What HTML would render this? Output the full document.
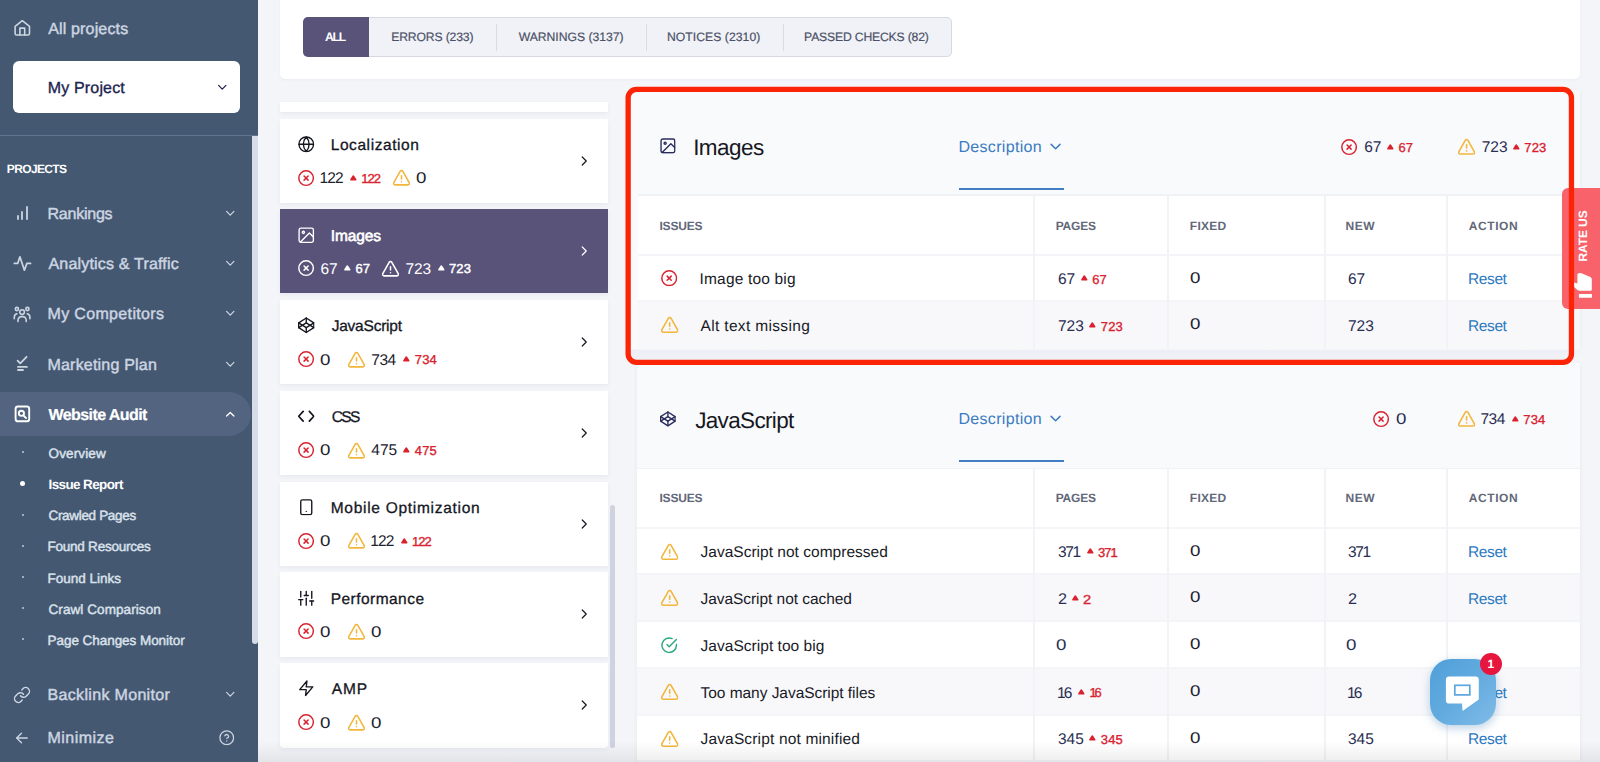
<!DOCTYPE html>
<html lang="en"><head><meta charset="utf-8"><title>Issue Report</title>
<style>
*{box-sizing:border-box;margin:0;padding:0}
html,body{width:1600px;height:762px;overflow:hidden}
body{font-family:"Liberation Sans",sans-serif;text-rendering:geometricPrecision;background:#f4f5f9;position:relative;color:#1b1c28}
.a{position:absolute}
.t{position:absolute;white-space:nowrap;line-height:1}
.ic{position:absolute;fill:none;stroke-linecap:round;stroke-linejoin:round;overflow:visible}
.sb{-webkit-text-stroke:0.35px currentColor}
.sbt{-webkit-text-stroke:0.18px currentColor}
.sbl{-webkit-text-stroke:0.45px currentColor}
.sbm{-webkit-text-stroke:0.3px currentColor}
.sbh{-webkit-text-stroke:0.6px currentColor}
.sbb{-webkit-text-stroke:0.2px currentColor}
</style></head><body>

<svg width="0" height="0" style="position:absolute">
<defs>
<symbol id="i-home" viewBox="0 0 24 24"><path d="M3 9l9-7 9 7v11a2 2 0 0 1-2 2H5a2 2 0 0 1-2-2z"/><polyline points="9 22 9 12 15 12 15 22"/></symbol>
<symbol id="i-bars" viewBox="0 0 24 24"><line x1="5" y1="21" x2="5" y2="16"/><line x1="12" y1="21" x2="12" y2="10"/><line x1="19" y1="21" x2="19" y2="2"/></symbol>
<symbol id="i-activity" viewBox="0 0 24 24"><polyline points="23 12 18 12 15 20 9 3 6 12 1 12"/></symbol>
<symbol id="i-users" viewBox="0 0 24 24"><circle cx="12" cy="9" r="3.4"/><path d="M5.5 22v-2.5a4.5 4.5 0 0 1 4.5-4.5h4a4.5 4.5 0 0 1 4.5 4.5V22"/><circle cx="4.6" cy="4.6" r="1.9"/><circle cx="19.4" cy="4.6" r="1.9"/><path d="M1 15.5v-2.2a3.4 3.4 0 0 1 3.2-3.4"/><path d="M23 15.5v-2.2a3.4 3.4 0 0 0-3.2-3.4"/></symbol>
<symbol id="i-plan" viewBox="0 0 24 24"><polyline points="5 8 10 13 20 2"/><line x1="3" y1="17" x2="21" y2="17"/><line x1="3" y1="22" x2="15" y2="22"/></symbol>
<symbol id="i-audit" viewBox="0 0 24 24"><rect x="1.5" y="1.5" width="21" height="21" rx="3"/><circle cx="11" cy="11" r="4.2"/><line x1="14.2" y1="14.2" x2="18" y2="18"/></symbol>
<symbol id="i-link" viewBox="0 0 24 24"><path d="M10 13a5 5 0 0 0 7.54.54l3-3a5 5 0 0 0-7.07-7.07l-1.72 1.71"/><path d="M14 11a5 5 0 0 0-7.54-.54l-3 3a5 5 0 0 0 7.07 7.07l1.71-1.71"/></symbol>
<symbol id="i-arrow-left" viewBox="0 0 24 24"><line x1="21" y1="12" x2="3" y2="12"/><polyline points="11 20 3 12 11 4"/></symbol>
<symbol id="i-help" viewBox="0 0 24 24"><circle cx="12" cy="12" r="10.6"/><path d="M9.09 9a3 3 0 0 1 5.83 1c0 2-3 3-3 3"/><line x1="12" y1="17" x2="12.01" y2="17"/></symbol>
<symbol id="i-globe" viewBox="0 0 24 24"><circle cx="12" cy="12" r="10.6"/><line x1="1.4" y1="12" x2="22.6" y2="12"/><path d="M12 1.4a16 16 0 0 1 4.2 10.6 16 16 0 0 1-4.2 10.6 16 16 0 0 1-4.2-10.6 16 16 0 0 1 4.2-10.6z"/></symbol>
<symbol id="i-image" viewBox="0 0 24 24"><rect x="1.6" y="1.6" width="20.8" height="20.8" rx="2.6"/><circle cx="7.8" cy="7.8" r="1.6"/><polyline points="22.4 14.6 16.5 8.7 3.6 21.8"/></symbol>
<symbol id="i-codepen" viewBox="0 0 24 24"><polygon points="12 1.5 23 8.5 23 15.5 12 22.5 1 15.5 1 8.5 12 1.5"/><line x1="12" y1="22.5" x2="12" y2="15.5"/><polyline points="23 8.5 12 15.5 1 8.5"/><polyline points="1 15.5 12 8.5 23 15.5"/><line x1="12" y1="1.5" x2="12" y2="8.5"/></symbol>
<symbol id="i-code" viewBox="0 0 24 24"><polyline points="16.5 19 23 12 16.5 5"/><polyline points="7.5 5 1 12 7.5 19"/></symbol>
<symbol id="i-phone" viewBox="0 0 24 24"><rect x="4" y="1.2" width="16" height="21.6" rx="2.4"/><line x1="12" y1="18" x2="12.01" y2="18"/></symbol>
<symbol id="i-sliders" viewBox="0 0 24 24"><line x1="4" y1="22" x2="4" y2="14"/><line x1="4" y1="10" x2="4" y2="2"/><line x1="12" y1="22" x2="12" y2="12"/><line x1="12" y1="8" x2="12" y2="2"/><line x1="20" y1="22" x2="20" y2="16"/><line x1="20" y1="12" x2="20" y2="2"/><line x1="1" y1="14" x2="7" y2="14"/><line x1="9" y1="8" x2="15" y2="8"/><line x1="17" y1="16" x2="23" y2="16"/></symbol>
<symbol id="i-zap" viewBox="0 0 24 24"><polygon points="13 1.5 2.5 14 12 14 11 22.5 21.5 10 12 10 13 1.5"/></symbol>
<symbol id="i-xc" viewBox="0 0 24 24"><circle cx="12" cy="12" r="10.8"/><line x1="15" y1="9" x2="9" y2="15"/><line x1="9" y1="9" x2="15" y2="15"/></symbol>
<symbol id="i-warn" viewBox="0 0 24 24"><path d="M10.1 3.2L1.1 19.3a2.1 2.1 0 0 0 1.8 3.1h18.2a2.1 2.1 0 0 0 1.8-3.1L13.9 3.2a2.2 2.2 0 0 0-3.8 0z"/><line x1="12" y1="9.5" x2="12" y2="14"/><line x1="12" y1="18" x2="12.01" y2="18"/></symbol>
<symbol id="i-check" viewBox="0 0 24 24"><path d="M22.6 11v1a10.6 10.6 0 1 1-6.3-9.7"/><polyline points="22.6 3.6 12 14.2 8.8 11"/></symbol>
<symbol id="i-chev-d" viewBox="0 0 24 24"><polyline points="5 8.5 12 15.5 19 8.5"/></symbol>
<symbol id="i-chev-u" viewBox="0 0 24 24"><polyline points="5 15.5 12 8.5 19 15.5"/></symbol>
<symbol id="i-chev-r" viewBox="0 0 24 24"><polyline points="8.5 4 16.5 12 8.5 20"/></symbol>
</defs>
</svg>

<div class="a" id="sidebar" style="left:0;top:0;width:258px;height:762px;background:#445872"></div>
<div class="a" style="left:0;top:135px;width:258px;height:1px;background:#60738f"></div>
<div class="a" style="left:252px;top:136px;width:6px;height:508px;background:#d6dce8;border-radius:0 0 3px 3px"></div>
<svg class="ic" style="left:10px;top:14px;width:26px;height:26px;stroke:#cdd5e1;stroke-width:1.6" viewBox="10 14 26 26"><path d="M15.1 26.4 L22.3 20.7 L29.5 26.4 V33.4 Q29.5 35 27.9 35 H16.7 Q15.1 35 15.1 33.4 Z"/><path d="M19.9 35 V28.1 H24.7 V35"/></svg>
<div class="t sbl" style="left:48.2px;top:22px;font-size:16px;color:#cdd5e1;letter-spacing:0.159px;">All projects</div>
<div class="a" style="left:13px;top:61px;width:227px;height:52px;background:#fff;border-radius:6px"></div>
<div class="t sb" style="left:47.8px;top:81px;font-size:16px;color:#1d2350;letter-spacing:0.153px;">My Project</div>
<svg class="ic" style="left:216px;top:81px;width:12.5px;height:12.5px;stroke:#1d2350;stroke-width:2.4;"><use href="#i-chev-d"/></svg>
<div class="t" style="left:6.8px;top:163px;font-size:12px;color:#fff;font-weight:700;letter-spacing:-0.64px;">PROJECTS</div>
<div class="t sbl" style="left:47.5px;top:207px;font-size:16px;color:#cdd5e1;letter-spacing:-0.229px;">Rankings</div>
<svg class="ic" style="left:223.5px;top:206.7px;width:12.5px;height:12.5px;stroke:#cdd5e1;stroke-width:2.4;"><use href="#i-chev-d"/></svg>
<div class="t sbl" style="left:48.5px;top:257px;font-size:16px;color:#cdd5e1;letter-spacing:0.186px;">Analytics &amp; Traffic</div>
<svg class="ic" style="left:223.5px;top:257px;width:12.5px;height:12.5px;stroke:#cdd5e1;stroke-width:2.4;"><use href="#i-chev-d"/></svg>
<div class="t sbl" style="left:47.5px;top:307px;font-size:16px;color:#cdd5e1;letter-spacing:0.344px;">My Competitors</div>
<svg class="ic" style="left:223.5px;top:307.4px;width:12.5px;height:12.5px;stroke:#cdd5e1;stroke-width:2.4;"><use href="#i-chev-d"/></svg>
<div class="t sbl" style="left:47.5px;top:358px;font-size:16px;color:#cdd5e1;letter-spacing:0.198px;">Marketing Plan</div>
<svg class="ic" style="left:223.5px;top:357.6px;width:12.5px;height:12.5px;stroke:#cdd5e1;stroke-width:2.4;"><use href="#i-chev-d"/></svg>
<div class="a" style="left:16.7px;top:215.2px;width:2px;height:4.9px;background:#cdd5e1;border-radius:1px;opacity:.9"></div>
<div class="a" style="left:21.0px;top:211px;width:2px;height:9.1px;background:#cdd5e1;border-radius:1px;opacity:.9"></div>
<div class="a" style="left:25.8px;top:206px;width:2px;height:14.1px;background:#cdd5e1;border-radius:1px;opacity:.9"></div>
<svg class="ic" style="left:10px;top:250px;width:26px;height:26px;stroke:#cdd5e1;stroke-width:1.7" viewBox="10 250 26 26"><polyline points="14.3 263.4 17.7 263.4 19.9 256.8 24.4 270.2 26.9 263.4 30.6 263.4"/></svg>
<svg class="ic" style="left:10px;top:302px;width:26px;height:24px;stroke:#cdd5e1;stroke-width:1.6" viewBox="10 302 26 24"><circle cx="22.1" cy="312.1" r="2.3"/><path d="M18 321.6v-1.4a3.6 3.6 0 0 1 3.6-3.6h1a3.6 3.6 0 0 1 3.6 3.6v1.4"/><circle cx="16.9" cy="309" r="1.6"/><circle cx="27.4" cy="309" r="1.6"/><path d="M14.3 318.8v-1.6a3.4 3.4 0 0 1 2.6-3.4"/><path d="M29.9 318.8v-1.6a3.4 3.4 0 0 0-2.6-3.4"/></svg>
<svg class="ic" style="left:10px;top:350px;width:26px;height:26px;stroke:#cdd5e1;stroke-width:1.8" viewBox="10 350 26 26"><polyline points="17.6 360.6 20.2 363.4 26.6 356.8"/><line x1="18" y1="366.9" x2="26.9" y2="366.9"/><line x1="18" y1="370" x2="23" y2="370"/></svg>
<div class="a" style="left:0;top:392px;width:251px;height:44px;background:#526480;border-radius:0 22px 22px 0"></div>
<svg class="ic" style="left:10px;top:400px;width:26px;height:28px;stroke:#fff;stroke-width:1.9" viewBox="10 400 26 28"><rect x="15.6" y="406.5" width="13.6" height="14.8" rx="2.4"/><circle cx="21.4" cy="413.3" r="2.6"/><line x1="23.4" y1="415.4" x2="26" y2="418"/></svg>
<div class="t sbb" style="left:48.5px;top:408px;font-size:16px;color:#fff;font-weight:700;letter-spacing:-0.571px;">Website Audit</div>
<svg class="ic" style="left:223.5px;top:407.7px;width:12.5px;height:12.5px;stroke:#fff;stroke-width:2.6;"><use href="#i-chev-u"/></svg>
<div class="t sbl" style="left:48.5px;top:447px;font-size:13.5px;color:#dbe1ea;letter-spacing:0.141px;">Overview</div>
<div class="a" style="left:21.5px;top:451.0px;width:2px;height:2px;border-radius:50%;background:#c0c9d8"></div>
<div class="t" style="left:48.5px;top:478px;font-size:13.5px;color:#fff;font-weight:700;letter-spacing:-0.616px;">Issue Report</div>
<div class="a" style="left:20px;top:480.9px;width:5px;height:5px;border-radius:50%;background:#fff"></div>
<div class="t sbl" style="left:48.5px;top:509px;font-size:13.5px;color:#dbe1ea;letter-spacing:-0.325px;">Crawled Pages</div>
<div class="a" style="left:21.5px;top:513.6px;width:2px;height:2px;border-radius:50%;background:#c0c9d8"></div>
<div class="t sbl" style="left:47.5px;top:540px;font-size:13.5px;color:#dbe1ea;letter-spacing:-0.236px;">Found Resources</div>
<div class="a" style="left:21.5px;top:544.8px;width:2px;height:2px;border-radius:50%;background:#c0c9d8"></div>
<div class="t sbl" style="left:47.5px;top:572px;font-size:13.5px;color:#dbe1ea;letter-spacing:-0.009px;">Found Links</div>
<div class="a" style="left:21.5px;top:576.0px;width:2px;height:2px;border-radius:50%;background:#c0c9d8"></div>
<div class="t sbl" style="left:48.5px;top:603px;font-size:13.5px;color:#dbe1ea;letter-spacing:0.085px;">Crawl Comparison</div>
<div class="a" style="left:21.5px;top:607.2px;width:2px;height:2px;border-radius:50%;background:#c0c9d8"></div>
<div class="t sbl" style="left:47.5px;top:634px;font-size:13.5px;color:#dbe1ea;letter-spacing:-0.047px;">Page Changes Monitor</div>
<div class="a" style="left:21.5px;top:638.4px;width:2px;height:2px;border-radius:50%;background:#c0c9d8"></div>
<svg class="ic" style="left:13.4px;top:685.5px;width:18px;height:18px;stroke:#cdd5e1;stroke-width:1.9;"><use href="#i-link"/></svg>
<div class="t sbl" style="left:47.5px;top:688px;font-size:16px;color:#cdd5e1;letter-spacing:0.33px;">Backlink Monitor</div>
<svg class="ic" style="left:223.5px;top:687.8px;width:12.5px;height:12.5px;stroke:#cdd5e1;stroke-width:2.4;"><use href="#i-chev-d"/></svg>
<svg class="ic" style="left:15.4px;top:731px;width:14px;height:14px;stroke:#cdd5e1;stroke-width:2.3;"><use href="#i-arrow-left"/></svg>
<div class="t sbl" style="left:47.5px;top:731px;font-size:16px;color:#cdd5e1;letter-spacing:0.454px;">Minimize</div>
<svg class="ic" style="left:218.8px;top:730.2px;width:15.5px;height:15.5px;stroke:#cdd5e1;stroke-width:2;"><use href="#i-help"/></svg>
<div class="a" style="left:280px;top:-6px;width:1300px;height:85px;background:#fff;border-radius:5px;box-shadow:0 1px 3px rgba(60,70,110,.05)"></div>
<div class="a" style="left:302.5px;top:16.5px;width:649px;height:40.5px;background:#f1f2f8;border:1.5px solid #d6d9e2;border-radius:5px"></div>
<div class="a" style="left:302.5px;top:16.5px;width:66.5px;height:40.5px;background:#595279;border-radius:5px 0 0 5px"></div>
<div class="t" style="left:325.0px;top:31px;font-size:12.2px;color:#fff;font-weight:700;letter-spacing:-1.248px;">ALL</div>
<div class="t sbt" style="left:391.2px;top:31px;font-size:12.2px;color:#4a5166;letter-spacing:-0.152px;">ERRORS (233)</div>
<div class="t sbt" style="left:518.7px;top:31px;font-size:12.2px;color:#4a5166;letter-spacing:-0.028px;">WARNINGS (3137)</div>
<div class="t sbt" style="left:667px;top:31px;font-size:12.2px;color:#4a5166;letter-spacing:0.036px;">NOTICES (2310)</div>
<div class="t sbt" style="left:804.1px;top:31px;font-size:12.2px;color:#4a5166;letter-spacing:-0.178px;">PASSED CHECKS (82)</div>
<div class="a" style="left:495.5px;top:24px;width:1.5px;height:27px;background:#d9dce5"></div>
<div class="a" style="left:645.5px;top:24px;width:1.5px;height:27px;background:#d9dce5"></div>
<div class="a" style="left:782.5px;top:24px;width:1.5px;height:27px;background:#d9dce5"></div>
<div class="a" style="left:280px;top:102px;width:328px;height:10px;background:#fff;box-shadow:0 2px 4px rgba(70,80,120,.07)"></div>
<div class="a" style="left:280px;top:119px;width:328px;height:84px;background:#fff;box-shadow:0 2px 4px rgba(70,80,120,.07)"></div>
<svg class="ic" style="left:297.5px;top:135.9px;width:16.5px;height:16.5px;stroke:#15161f;stroke-width:2.0;"><use href="#i-globe"/></svg>
<div class="t sbm" style="left:330.7px;top:138px;font-size:15.5px;color:#15161f;letter-spacing:0.578px;">Localization</div>
<svg class="ic" style="left:577.5px;top:154.7px;width:12px;height:12px;stroke:#15161f;stroke-width:2.4;"><use href="#i-chev-r"/></svg>
<svg class="ic" style="left:297.5px;top:169.7px;width:16.2px;height:16.2px;stroke:#d9222f;stroke-width:2.2;"><use href="#i-xc"/></svg>
<div class="t" style="left:319.5px;top:171px;font-size:15.5px;color:#21222d;letter-spacing:-0.92px;">122</div>
<svg class="ic" style="left:349.79999999999995px;top:174.5px;width:6.6px;height:5.6px;stroke:#d9222f;stroke-width:1.6;stroke-linejoin:round;fill:#d9222f" viewBox="0 0 7 6"><path d="M3.5 1.1 L6.1 5.1 L0.9 5.1 Z"/></svg>
<div class="t sb" style="left:361.2px;top:172px;font-size:13px;color:#d9222f;letter-spacing:-0.93px;">122</div>
<svg class="ic" style="left:392.79999999999995px;top:169.3px;width:17px;height:17px;stroke:#f3b63c;stroke-width:2.2;"><use href="#i-warn"/></svg>
<div class="t" style="left:415.9px;top:171px;font-size:15.5px;color:#21222d;transform:scaleX(1.207);transform-origin:0.5px 0;">0</div>
<div class="a" style="left:280px;top:209px;width:328px;height:84px;background:#595279;box-shadow:0 2px 4px rgba(70,80,120,.07)"></div>
<svg class="ic" style="left:297.5px;top:226.64999999999998px;width:16.5px;height:16.5px;stroke:#fff;stroke-width:2.0;"><use href="#i-image"/></svg>
<div class="t sbh" style="left:330.7px;top:229px;font-size:15.5px;color:#fff;letter-spacing:-0.116px;">Images</div>
<svg class="ic" style="left:577.5px;top:245.45px;width:12px;height:12px;stroke:#fff;stroke-width:2.4;"><use href="#i-chev-r"/></svg>
<svg class="ic" style="left:297.5px;top:260.45px;width:16.2px;height:16.2px;stroke:#fff;stroke-width:2.2;"><use href="#i-xc"/></svg>
<div class="t" style="left:320.5px;top:262px;font-size:15.5px;color:#fff;letter-spacing:-0.02px;">67</div>
<svg class="ic" style="left:344.0px;top:265.25px;width:6.6px;height:5.6px;stroke:#fff;stroke-width:1.6;stroke-linejoin:round;fill:#fff" viewBox="0 0 7 6"><path d="M3.5 1.1 L6.1 5.1 L0.9 5.1 Z"/></svg>
<div class="t sbl" style="left:355.4px;top:262px;font-size:13px;color:#fff;letter-spacing:0.17px;">67</div>
<svg class="ic" style="left:381.79999999999995px;top:260.05px;width:17px;height:17px;stroke:#fff;stroke-width:2.2;"><use href="#i-warn"/></svg>
<div class="t" style="left:405.4px;top:262px;font-size:15.5px;color:#fff;letter-spacing:-0.02px;">723</div>
<svg class="ic" style="left:437.49999999999994px;top:265.25px;width:6.6px;height:5.6px;stroke:#fff;stroke-width:1.6;stroke-linejoin:round;fill:#fff" viewBox="0 0 7 6"><path d="M3.5 1.1 L6.1 5.1 L0.9 5.1 Z"/></svg>
<div class="t sbl" style="left:448.9px;top:262px;font-size:13px;color:#fff;letter-spacing:0.17px;">723</div>
<div class="a" style="left:280px;top:300px;width:328px;height:84px;background:#fff;box-shadow:0 2px 4px rgba(70,80,120,.07)"></div>
<svg class="ic" style="left:297.5px;top:317.4px;width:16.5px;height:16.5px;stroke:#15161f;stroke-width:2.0;"><use href="#i-codepen"/></svg>
<div class="t sbm" style="left:331.7px;top:319px;font-size:15.5px;color:#15161f;letter-spacing:-0.228px;">JavaScript</div>
<svg class="ic" style="left:577.5px;top:336.2px;width:12px;height:12px;stroke:#15161f;stroke-width:2.4;"><use href="#i-chev-r"/></svg>
<svg class="ic" style="left:297.5px;top:351.2px;width:16.2px;height:16.2px;stroke:#d9222f;stroke-width:2.2;"><use href="#i-xc"/></svg>
<div class="t" style="left:320.0px;top:353px;font-size:15.5px;color:#21222d;transform:scaleX(1.207);transform-origin:0.5px 0;">0</div>
<svg class="ic" style="left:347.7px;top:350.8px;width:17px;height:17px;stroke:#f3b63c;stroke-width:2.2;"><use href="#i-warn"/></svg>
<div class="t" style="left:371.3px;top:353px;font-size:15.5px;color:#21222d;letter-spacing:-0.52px;">734</div>
<svg class="ic" style="left:403.4px;top:356.0px;width:6.6px;height:5.6px;stroke:#d9222f;stroke-width:1.6;stroke-linejoin:round;fill:#d9222f" viewBox="0 0 7 6"><path d="M3.5 1.1 L6.1 5.1 L0.9 5.1 Z"/></svg>
<div class="t sb" style="left:414.8px;top:353px;font-size:13px;color:#d9222f;letter-spacing:0.17px;">734</div>
<div class="a" style="left:280px;top:391px;width:328px;height:84px;background:#fff;box-shadow:0 2px 4px rgba(70,80,120,.07)"></div>
<svg class="ic" style="left:297.5px;top:408.15px;width:16.5px;height:16.5px;stroke:#15161f;stroke-width:2.5;"><use href="#i-code"/></svg>
<div class="t sbm" style="left:331.7px;top:410px;font-size:15.5px;color:#15161f;letter-spacing:-1.566px;">CSS</div>
<svg class="ic" style="left:577.5px;top:426.95px;width:12px;height:12px;stroke:#15161f;stroke-width:2.4;"><use href="#i-chev-r"/></svg>
<svg class="ic" style="left:297.5px;top:441.95px;width:16.2px;height:16.2px;stroke:#d9222f;stroke-width:2.2;"><use href="#i-xc"/></svg>
<div class="t" style="left:320.0px;top:443px;font-size:15.5px;color:#21222d;transform:scaleX(1.207);transform-origin:0.5px 0;">0</div>
<svg class="ic" style="left:347.7px;top:441.55px;width:17px;height:17px;stroke:#f3b63c;stroke-width:2.2;"><use href="#i-warn"/></svg>
<div class="t" style="left:371.3px;top:443px;font-size:15.5px;color:#21222d;letter-spacing:-0.02px;">475</div>
<svg class="ic" style="left:403.4px;top:446.75px;width:6.6px;height:5.6px;stroke:#d9222f;stroke-width:1.6;stroke-linejoin:round;fill:#d9222f" viewBox="0 0 7 6"><path d="M3.5 1.1 L6.1 5.1 L0.9 5.1 Z"/></svg>
<div class="t sb" style="left:414.8px;top:444px;font-size:13px;color:#d9222f;letter-spacing:0.17px;">475</div>
<div class="a" style="left:280px;top:482px;width:328px;height:84px;background:#fff;box-shadow:0 2px 4px rgba(70,80,120,.07)"></div>
<svg class="ic" style="left:297.5px;top:498.9px;width:16.5px;height:16.5px;stroke:#15161f;stroke-width:2.0;"><use href="#i-phone"/></svg>
<div class="t sbm" style="left:330.7px;top:501px;font-size:15.5px;color:#15161f;letter-spacing:0.712px;">Mobile Optimization</div>
<svg class="ic" style="left:577.5px;top:517.7px;width:12px;height:12px;stroke:#15161f;stroke-width:2.4;"><use href="#i-chev-r"/></svg>
<svg class="ic" style="left:297.5px;top:532.7px;width:16.2px;height:16.2px;stroke:#d9222f;stroke-width:2.2;"><use href="#i-xc"/></svg>
<div class="t" style="left:320.0px;top:534px;font-size:15.5px;color:#21222d;transform:scaleX(1.207);transform-origin:0.5px 0;">0</div>
<svg class="ic" style="left:347.7px;top:532.3px;width:17px;height:17px;stroke:#f3b63c;stroke-width:2.2;"><use href="#i-warn"/></svg>
<div class="t" style="left:370.3px;top:534px;font-size:15.5px;color:#21222d;letter-spacing:-0.92px;">122</div>
<svg class="ic" style="left:400.59999999999997px;top:537.5px;width:6.6px;height:5.6px;stroke:#d9222f;stroke-width:1.6;stroke-linejoin:round;fill:#d9222f" viewBox="0 0 7 6"><path d="M3.5 1.1 L6.1 5.1 L0.9 5.1 Z"/></svg>
<div class="t sb" style="left:412.0px;top:535px;font-size:13px;color:#d9222f;letter-spacing:-0.93px;">122</div>
<div class="a" style="left:280px;top:572px;width:328px;height:85px;background:#fff;box-shadow:0 2px 4px rgba(70,80,120,.07)"></div>
<svg class="ic" style="left:297.5px;top:589.6500000000001px;width:16.5px;height:16.5px;stroke:#15161f;stroke-width:2.0;"><use href="#i-sliders"/></svg>
<div class="t sbm" style="left:330.7px;top:592px;font-size:15.5px;color:#15161f;letter-spacing:0.459px;">Performance</div>
<svg class="ic" style="left:577.5px;top:608.45px;width:12px;height:12px;stroke:#15161f;stroke-width:2.4;"><use href="#i-chev-r"/></svg>
<svg class="ic" style="left:297.5px;top:623.45px;width:16.2px;height:16.2px;stroke:#d9222f;stroke-width:2.2;"><use href="#i-xc"/></svg>
<div class="t" style="left:320.0px;top:625px;font-size:15.5px;color:#21222d;transform:scaleX(1.207);transform-origin:0.5px 0;">0</div>
<svg class="ic" style="left:347.7px;top:623.0500000000001px;width:17px;height:17px;stroke:#f3b63c;stroke-width:2.2;"><use href="#i-warn"/></svg>
<div class="t" style="left:370.8px;top:625px;font-size:15.5px;color:#21222d;transform:scaleX(1.207);transform-origin:0.5px 0;">0</div>
<div class="a" style="left:280px;top:663px;width:328px;height:85px;background:#fff;box-shadow:0 2px 4px rgba(70,80,120,.07);border-radius:0 0 4px 4px"></div>
<svg class="ic" style="left:297.5px;top:680.4000000000001px;width:16.5px;height:16.5px;stroke:#15161f;stroke-width:2.0;"><use href="#i-zap"/></svg>
<div class="t sbm" style="left:331.7px;top:682px;font-size:15.5px;color:#15161f;letter-spacing:0.925px;">AMP</div>
<svg class="ic" style="left:577.5px;top:699.2px;width:12px;height:12px;stroke:#15161f;stroke-width:2.4;"><use href="#i-chev-r"/></svg>
<svg class="ic" style="left:297.5px;top:714.2px;width:16.2px;height:16.2px;stroke:#d9222f;stroke-width:2.2;"><use href="#i-xc"/></svg>
<div class="t" style="left:320.0px;top:716px;font-size:15.5px;color:#21222d;transform:scaleX(1.207);transform-origin:0.5px 0;">0</div>
<svg class="ic" style="left:347.7px;top:713.8000000000001px;width:17px;height:17px;stroke:#f3b63c;stroke-width:2.2;"><use href="#i-warn"/></svg>
<div class="t" style="left:370.8px;top:716px;font-size:15.5px;color:#21222d;transform:scaleX(1.207);transform-origin:0.5px 0;">0</div>
<div class="a" style="left:609.5px;top:504.5px;width:5.5px;height:243px;background:#cfd2df;border-radius:3px"></div>
<div class="a" style="left:637px;top:90.0px;width:943px;height:260.0px;background:#f9fafc;box-shadow:0 1px 4px rgba(70,80,120,.07)"></div>
<svg class="ic" style="left:660.4px;top:138.4px;width:15.8px;height:15.8px;stroke:#2a2d5c;stroke-width:2.1;"><use href="#i-image"/></svg>
<div class="t" style="left:693.2px;top:137px;font-size:22.5px;color:#16171f;letter-spacing:-0.567px;">Images</div>
<div class="t" style="left:958.4px;top:140px;font-size:16px;color:#3a7bc2;letter-spacing:0.327px;">Description</div>
<svg class="ic" style="left:1047.8px;top:138.6px;width:15.2px;height:15.2px;stroke:#3a7bc2;stroke-width:2.3;"><use href="#i-chev-d"/></svg>
<div class="a" style="left:958.7px;top:188.0px;width:105.7px;height:2px;background:#3f7fc2"></div>
<svg class="ic" style="left:1340.8px;top:138.6px;width:16.2px;height:16.2px;stroke:#d9222f;stroke-width:2.2;"><use href="#i-xc"/></svg>
<div class="t" style="left:1364.2px;top:140px;font-size:15.5px;color:#2a2e52;letter-spacing:-0.02px;">67</div>
<svg class="ic" style="left:1387px;top:143.79999999999998px;width:6.6px;height:5.6px;stroke:#d9222f;stroke-width:1.6;stroke-linejoin:round;fill:#d9222f" viewBox="0 0 7 6"><path d="M3.5 1.1 L6.1 5.1 L0.9 5.1 Z"/></svg>
<div class="t sb" style="left:1398.4px;top:141px;font-size:13px;color:#d9222f;letter-spacing:0.17px;">67</div>
<svg class="ic" style="left:1458.4px;top:138.2px;width:17.2px;height:17.2px;stroke:#f3b63c;stroke-width:2.2;"><use href="#i-warn"/></svg>
<div class="t" style="left:1481.7px;top:140px;font-size:15.5px;color:#2a2e52;letter-spacing:-0.02px;">723</div>
<svg class="ic" style="left:1512.9px;top:143.79999999999998px;width:6.6px;height:5.6px;stroke:#d9222f;stroke-width:1.6;stroke-linejoin:round;fill:#d9222f" viewBox="0 0 7 6"><path d="M3.5 1.1 L6.1 5.1 L0.9 5.1 Z"/></svg>
<div class="t sb" style="left:1524.3px;top:141px;font-size:13px;color:#d9222f;letter-spacing:0.17px;">723</div>
<div class="a" style="left:637px;top:194.0px;width:943px;height:156.0px;background:#fff"></div>
<div class="a" style="left:637px;top:301.2px;width:943px;height:48.8px;background:#f8f8fb"></div>
<div class="a" style="left:637px;top:194.0px;width:943px;height:1.5px;background:#f1f2f6"></div>
<div class="a" style="left:637px;top:253.5px;width:943px;height:2px;background:#f4f5f8"></div>
<div class="a" style="left:637px;top:300.2px;width:943px;height:2px;background:#f4f5f8"></div>
<div class="a" style="left:637px;top:349.0px;width:943px;height:2px;background:#f4f5f8"></div>
<div class="a" style="left:1033.3px;top:194.0px;width:2px;height:156.0px;background:#f2f3f7"></div>
<div class="a" style="left:1166.8px;top:194.0px;width:2px;height:156.0px;background:#f2f3f7"></div>
<div class="a" style="left:1323.6px;top:194.0px;width:2px;height:156.0px;background:#f2f3f7"></div>
<div class="a" style="left:1446.2px;top:194.0px;width:2px;height:156.0px;background:#f2f3f7"></div>
<div class="t" style="left:659.4px;top:220px;font-size:12px;color:#626879;font-weight:700;letter-spacing:-0.162px;">ISSUES</div>
<div class="t" style="left:1055.7px;top:220px;font-size:12px;color:#626879;font-weight:700;letter-spacing:-0.204px;">PAGES</div>
<div class="t" style="left:1189.8px;top:220px;font-size:12px;color:#626879;font-weight:700;letter-spacing:0.257px;">FIXED</div>
<div class="t" style="left:1345.5px;top:220px;font-size:12px;color:#626879;font-weight:700;letter-spacing:0.565px;">NEW</div>
<div class="t" style="left:1468.7px;top:220px;font-size:12px;color:#626879;font-weight:700;letter-spacing:0.594px;">ACTION</div>
<svg class="ic" style="left:660.8px;top:270.1px;width:16.4px;height:16.4px;stroke:#d9222f;stroke-width:2.2;"><use href="#i-xc"/></svg>
<div class="t" style="left:699.5px;top:272px;font-size:15.5px;color:#191a26;letter-spacing:0.183px;">Image too big</div>
<div class="t" style="left:1058.0px;top:272px;font-size:15.5px;color:#2a2e52;letter-spacing:-0.02px;">67</div>
<svg class="ic" style="left:1080.8px;top:275.29999999999995px;width:6.6px;height:5.6px;stroke:#d9222f;stroke-width:1.6;stroke-linejoin:round;fill:#d9222f" viewBox="0 0 7 6"><path d="M3.5 1.1 L6.1 5.1 L0.9 5.1 Z"/></svg>
<div class="t sb" style="left:1092.2px;top:273px;font-size:13px;color:#d9222f;letter-spacing:0.17px;">67</div>
<div class="t" style="left:1189.9px;top:271px;font-size:15.5px;color:#20212f;transform:scaleX(1.207);transform-origin:0.5px 0;">0</div>
<div class="t" style="left:1348.0px;top:272px;font-size:15.5px;color:#2a2e52;letter-spacing:-0.02px;">67</div>
<div class="t" style="left:1468px;top:272px;font-size:15.5px;color:#2b78bf;letter-spacing:-0.396px;">Reset</div>
<svg class="ic" style="left:660.6px;top:316.45px;width:17.4px;height:17.4px;stroke:#f3b63c;stroke-width:2.2;"><use href="#i-warn"/></svg>
<div class="t" style="left:700.5px;top:319px;font-size:15.5px;color:#191a26;letter-spacing:0.34px;">Alt text missing</div>
<div class="t" style="left:1058.0px;top:319px;font-size:15.5px;color:#2a2e52;letter-spacing:-0.02px;">723</div>
<svg class="ic" style="left:1089.4px;top:322.04999999999995px;width:6.6px;height:5.6px;stroke:#d9222f;stroke-width:1.6;stroke-linejoin:round;fill:#d9222f" viewBox="0 0 7 6"><path d="M3.5 1.1 L6.1 5.1 L0.9 5.1 Z"/></svg>
<div class="t sb" style="left:1100.8px;top:320px;font-size:13px;color:#d9222f;letter-spacing:0.17px;">723</div>
<div class="t" style="left:1189.9px;top:317px;font-size:15.5px;color:#20212f;transform:scaleX(1.207);transform-origin:0.5px 0;">0</div>
<div class="t" style="left:1348.0px;top:319px;font-size:15.5px;color:#2a2e52;letter-spacing:-0.02px;">723</div>
<div class="t" style="left:1468px;top:319px;font-size:15.5px;color:#2b78bf;letter-spacing:-0.396px;">Reset</div>
<div class="a" style="left:637px;top:362.5px;width:943px;height:408.1px;background:#f9fafc;box-shadow:0 1px 4px rgba(70,80,120,.07)"></div>
<svg class="ic" style="left:660.4px;top:410.9px;width:15.8px;height:15.8px;stroke:#2a2d5c;stroke-width:2.1;"><use href="#i-codepen"/></svg>
<div class="t" style="left:695.2px;top:410px;font-size:22.5px;color:#16171f;letter-spacing:-0.665px;">JavaScript</div>
<div class="t" style="left:958.4px;top:412px;font-size:16px;color:#3a7bc2;letter-spacing:0.327px;">Description</div>
<svg class="ic" style="left:1047.8px;top:411.1px;width:15.2px;height:15.2px;stroke:#3a7bc2;stroke-width:2.3;"><use href="#i-chev-d"/></svg>
<div class="a" style="left:958.7px;top:460.0px;width:105.7px;height:2px;background:#3f7fc2"></div>
<svg class="ic" style="left:1373px;top:410.5px;width:16.2px;height:16.2px;stroke:#d9222f;stroke-width:2.2;"><use href="#i-xc"/></svg>
<div class="t" style="left:1396.0px;top:412px;font-size:15.5px;color:#2a2e52;transform:scaleX(1.207);transform-origin:0.5px 0;">0</div>
<svg class="ic" style="left:1457.5px;top:410.09999999999997px;width:17.2px;height:17.2px;stroke:#f3b63c;stroke-width:2.2;"><use href="#i-warn"/></svg>
<div class="t" style="left:1480.5px;top:412px;font-size:15.5px;color:#2a2e52;letter-spacing:-0.52px;">734</div>
<svg class="ic" style="left:1512px;top:415.7px;width:6.6px;height:5.6px;stroke:#d9222f;stroke-width:1.6;stroke-linejoin:round;fill:#d9222f" viewBox="0 0 7 6"><path d="M3.5 1.1 L6.1 5.1 L0.9 5.1 Z"/></svg>
<div class="t sb" style="left:1523.3px;top:413px;font-size:13px;color:#d9222f;letter-spacing:0.17px;">734</div>
<div class="a" style="left:637px;top:467.5px;width:943px;height:303.1px;background:#fff"></div>
<div class="a" style="left:637px;top:574.2px;width:943px;height:46.8px;background:#f8f8fb"></div>
<div class="a" style="left:637px;top:667.8px;width:943px;height:46.8px;background:#f8f8fb"></div>
<div class="a" style="left:637px;top:467.5px;width:943px;height:1.5px;background:#f1f2f6"></div>
<div class="a" style="left:637px;top:526.5px;width:943px;height:2px;background:#f4f5f8"></div>
<div class="a" style="left:637px;top:573.2px;width:943px;height:2px;background:#f4f5f8"></div>
<div class="a" style="left:637px;top:620.0px;width:943px;height:2px;background:#f4f5f8"></div>
<div class="a" style="left:637px;top:666.8px;width:943px;height:2px;background:#f4f5f8"></div>
<div class="a" style="left:637px;top:713.5px;width:943px;height:2px;background:#f4f5f8"></div>
<div class="a" style="left:637px;top:760.2px;width:943px;height:2px;background:#f4f5f8"></div>
<div class="a" style="left:1033.3px;top:467.5px;width:2px;height:303.1px;background:#f2f3f7"></div>
<div class="a" style="left:1166.8px;top:467.5px;width:2px;height:303.1px;background:#f2f3f7"></div>
<div class="a" style="left:1323.6px;top:467.5px;width:2px;height:303.1px;background:#f2f3f7"></div>
<div class="a" style="left:1446.2px;top:467.5px;width:2px;height:303.1px;background:#f2f3f7"></div>
<div class="t" style="left:659.4px;top:492px;font-size:12px;color:#626879;font-weight:700;letter-spacing:-0.162px;">ISSUES</div>
<div class="t" style="left:1055.7px;top:492px;font-size:12px;color:#626879;font-weight:700;letter-spacing:-0.204px;">PAGES</div>
<div class="t" style="left:1189.8px;top:492px;font-size:12px;color:#626879;font-weight:700;letter-spacing:0.257px;">FIXED</div>
<div class="t" style="left:1345.5px;top:492px;font-size:12px;color:#626879;font-weight:700;letter-spacing:0.565px;">NEW</div>
<div class="t" style="left:1468.7px;top:492px;font-size:12px;color:#626879;font-weight:700;letter-spacing:0.594px;">ACTION</div>
<svg class="ic" style="left:660.6px;top:542.7px;width:17.4px;height:17.4px;stroke:#f3b63c;stroke-width:2.2;"><use href="#i-warn"/></svg>
<div class="t" style="left:700.5px;top:545px;font-size:15.5px;color:#191a26;letter-spacing:0.016px;">JavaScript not compressed</div>
<div class="t" style="left:1058.0px;top:545px;font-size:15.5px;color:#2a2e52;letter-spacing:-1.42px;">371</div>
<svg class="ic" style="left:1086.6000000000001px;top:548.3000000000001px;width:6.6px;height:5.6px;stroke:#d9222f;stroke-width:1.6;stroke-linejoin:round;fill:#d9222f" viewBox="0 0 7 6"><path d="M3.5 1.1 L6.1 5.1 L0.9 5.1 Z"/></svg>
<div class="t sb" style="left:1098.0px;top:546px;font-size:13px;color:#d9222f;letter-spacing:-0.93px;">371</div>
<div class="t" style="left:1189.9px;top:544px;font-size:15.5px;color:#20212f;transform:scaleX(1.207);transform-origin:0.5px 0;">0</div>
<div class="t" style="left:1348.0px;top:545px;font-size:15.5px;color:#2a2e52;letter-spacing:-1.42px;">371</div>
<div class="t" style="left:1468px;top:545px;font-size:15.5px;color:#2b78bf;letter-spacing:-0.396px;">Reset</div>
<svg class="ic" style="left:660.6px;top:589.45px;width:17.4px;height:17.4px;stroke:#f3b63c;stroke-width:2.2;"><use href="#i-warn"/></svg>
<div class="t" style="left:700.5px;top:592px;font-size:15.5px;color:#191a26;letter-spacing:-0.054px;">JavaScript not cached</div>
<div class="t" style="left:1057.5px;top:592px;font-size:15.5px;color:#2a2e52;transform:scaleX(1.05);transform-origin:0.5px 0;">2</div>
<svg class="ic" style="left:1072.2px;top:595.0500000000001px;width:6.6px;height:5.6px;stroke:#d9222f;stroke-width:1.6;stroke-linejoin:round;fill:#d9222f" viewBox="0 0 7 6"><path d="M3.5 1.1 L6.1 5.1 L0.9 5.1 Z"/></svg>
<div class="t sb" style="left:1083.1px;top:593px;font-size:13px;color:#d9222f;transform:scaleX(1.124);transform-origin:0.5px 0;">2</div>
<div class="t" style="left:1189.9px;top:590px;font-size:15.5px;color:#20212f;transform:scaleX(1.207);transform-origin:0.5px 0;">0</div>
<div class="t" style="left:1347.5px;top:592px;font-size:15.5px;color:#2a2e52;transform:scaleX(1.05);transform-origin:0.5px 0;">2</div>
<div class="t" style="left:1468px;top:592px;font-size:15.5px;color:#2b78bf;letter-spacing:-0.396px;">Reset</div>
<svg class="ic" style="left:661px;top:636.6px;width:16.4px;height:16.4px;stroke:#2aa87e;stroke-width:2.1;"><use href="#i-check"/></svg>
<div class="t" style="left:700.5px;top:639px;font-size:15.5px;color:#191a26;letter-spacing:0.036px;">JavaScript too big</div>
<div class="t" style="left:1055.8px;top:638px;font-size:15.5px;color:#2a2e52;transform:scaleX(1.207);transform-origin:0.5px 0;">0</div>
<div class="t" style="left:1189.9px;top:637px;font-size:15.5px;color:#20212f;transform:scaleX(1.207);transform-origin:0.5px 0;">0</div>
<div class="t" style="left:1345.5px;top:638px;font-size:15.5px;color:#2a2e52;transform:scaleX(1.207);transform-origin:0.5px 0;">0</div>
<svg class="ic" style="left:660.6px;top:682.95px;width:17.4px;height:17.4px;stroke:#f3b63c;stroke-width:2.2;"><use href="#i-warn"/></svg>
<div class="t" style="left:700.5px;top:686px;font-size:15.5px;color:#191a26;letter-spacing:-0.041px;">Too many JavaScript files</div>
<div class="t" style="left:1057px;top:686px;font-size:15.5px;color:#2a2e52;letter-spacing:-1.82px;">16</div>
<svg class="ic" style="left:1078.0px;top:688.5500000000001px;width:6.6px;height:5.6px;stroke:#d9222f;stroke-width:1.6;stroke-linejoin:round;fill:#d9222f" viewBox="0 0 7 6"><path d="M3.5 1.1 L6.1 5.1 L0.9 5.1 Z"/></svg>
<div class="t sb" style="left:1089.4px;top:686px;font-size:13px;color:#d9222f;letter-spacing:-2.03px;">16</div>
<div class="t" style="left:1189.9px;top:684px;font-size:15.5px;color:#20212f;transform:scaleX(1.207);transform-origin:0.5px 0;">0</div>
<div class="t" style="left:1347px;top:686px;font-size:15.5px;color:#2a2e52;letter-spacing:-1.82px;">16</div>
<div class="t" style="left:1468px;top:686px;font-size:15.5px;color:#2b78bf;letter-spacing:-0.396px;">Reset</div>
<svg class="ic" style="left:660.6px;top:729.7px;width:17.4px;height:17.4px;stroke:#f3b63c;stroke-width:2.2;"><use href="#i-warn"/></svg>
<div class="t" style="left:700.5px;top:732px;font-size:15.5px;color:#191a26;letter-spacing:0.159px;">JavaScript not minified</div>
<div class="t" style="left:1058.0px;top:732px;font-size:15.5px;color:#2a2e52;letter-spacing:-0.02px;">345</div>
<svg class="ic" style="left:1089.4px;top:735.3000000000001px;width:6.6px;height:5.6px;stroke:#d9222f;stroke-width:1.6;stroke-linejoin:round;fill:#d9222f" viewBox="0 0 7 6"><path d="M3.5 1.1 L6.1 5.1 L0.9 5.1 Z"/></svg>
<div class="t sb" style="left:1100.8px;top:733px;font-size:13px;color:#d9222f;letter-spacing:0.17px;">345</div>
<div class="t" style="left:1189.9px;top:731px;font-size:15.5px;color:#20212f;transform:scaleX(1.207);transform-origin:0.5px 0;">0</div>
<div class="t" style="left:1348.0px;top:732px;font-size:15.5px;color:#2a2e52;letter-spacing:-0.02px;">345</div>
<div class="t" style="left:1468px;top:732px;font-size:15.5px;color:#2b78bf;letter-spacing:-0.396px;">Reset</div>
<div class="a" style="left:1562px;top:188.3px;width:44px;height:121.2px;background:#f8636b;border-radius:6px"></div>
<div class="t" style="left:1583px;top:235.5px;font-size:12px;font-weight:700;color:#fff;letter-spacing:-0.1px;transform:translate(-50%,-50%) rotate(-90deg)">RATE US</div>
<svg class="a" style="left:1570px;top:268px;width:30px;height:34px" viewBox="1570 268 30 34"><rect x="1578.9" y="294.1" width="13.1" height="3.7" rx="0.5" fill="#fff"/><path d="M1577.4 274.2 Q1578.6 272.8 1580.8 273.1 L1590.4 277 Q1591.8 277.7 1591.8 279.2 L1591.8 289.4 Q1591.8 290.7 1590.5 290.7 L1579.6 290.7 Q1578.4 290.7 1577.5 289.9 L1574.6 287.5 Q1574 286.9 1574 286 L1574 283.5 Q1574 282.3 1575.1 282.7 L1577.4 283.6 Z" fill="#fff"/></svg>
<div class="a" style="left:630px;top:90px;width:8px;height:259px;background:#f9fafc"></div>
<div class="a" style="left:630px;top:349.5px;width:942px;height:11px;background:linear-gradient(to bottom,#eeeef6,#f1f2f7)"></div>
<svg class="a" style="left:620px;top:80px;width:960px;height:290px" viewBox="620 80 960 290"><rect x="628.15" y="89.35" width="943.3" height="273" rx="8.4" fill="none" stroke="#fb2407" stroke-width="5.3"/></svg>
<div class="a" style="left:1429.5px;top:658.5px;width:66.5px;height:66.5px;border-radius:21px;background:linear-gradient(135deg,#509fd9 0%,#62abdf 50%,#80bbe7 100%);box-shadow:0 3px 10px rgba(60,120,180,.35)"></div>
<svg class="a" style="left:1440px;top:670px;width:46px;height:46px" viewBox="1440 670 46 46"><path d="M1449.2 676.4 H1475.4 Q1478.8 676.4 1478.8 679.8 V699.6 L1462.6 711 L1462 703.6 H1449.2 Q1445.9 703.6 1445.9 700.2 V679.8 Q1445.9 676.4 1449.2 676.4 Z" fill="#fff"/><rect x="1454.8" y="685.3" width="15" height="9.6" fill="none" stroke="#5ba6dd" stroke-width="1.7"/></svg>
<div class="a" style="left:1479.7px;top:652.6px;width:22.4px;height:22.4px;border-radius:50%;background:#e7163f"></div>
<div class="t" style="left:1487.6px;top:658px;font-size:12px;color:#fff;font-weight:700;">1</div>
<div class="a" style="left:258px;top:741px;width:1342px;height:21px;background:linear-gradient(to bottom,rgba(20,20,30,0),rgba(20,20,30,.03) 45%,rgba(20,20,30,.075))"></div>
</body></html>
